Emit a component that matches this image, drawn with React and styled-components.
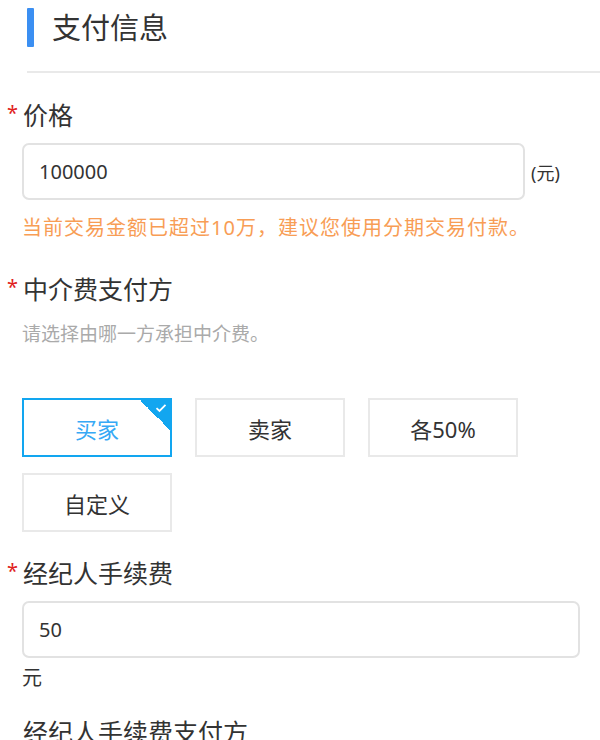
import React, { useState } from "react";
import styled, { createGlobalStyle } from "styled-components";

const GlobalStyle = createGlobalStyle`
  body {
    margin: 0;
    background: #fff;
    font-family: "Noto Sans", "Noto Sans CJK SC", sans-serif;
    color: #333;
  }
`;

const options = ["买家", "卖家", "各50%", "自定义"];

const App = () => {
  const [payer, setPayer] = useState("买家");

  return (
    <Page>
      <GlobalStyle />
      <Header>
        <Bar />
        <Title>支付信息</Title>
      </Header>
      <Form>
        <Field>
          <Label required>价格</Label>
          <InputRow>
            <Input defaultValue="100000" width="503px" />
            <Unit>(元)</Unit>
          </InputRow>
          <Hint>当前交易金额已超过10万，建议您使用分期交易付款。</Hint>
        </Field>

        <Field>
          <Label required>中介费支付方</Label>
          <SubText>请选择由哪一方承担中介费。</SubText>
          <Options>
            {options.map((o) => (
              <Option key={o} active={o === payer} onClick={() => setPayer(o)}>
                {o}
                {o === payer && (
                  <Corner>
                    <svg width="12" height="10" viewBox="0 0 12 10">
                      <path
                        d="M1.5 5.2 L4.5 8 L10.5 1.8"
                        fill="none"
                        stroke="#fff"
                        strokeWidth="1.8"
                      />
                    </svg>
                  </Corner>
                )}
              </Option>
            ))}
          </Options>
        </Field>

        <Field>
          <Label required>经纪人手续费</Label>
          <InputRow>
            <Input defaultValue="50" width="558px" />
          </InputRow>
          <After>元</After>
        </Field>

        <Field>
          <Label>经纪人手续费支付方</Label>
        </Field>
      </Form>
    </Page>
  );
};

const Page = styled.div`
  width: 600px;
  height: 740px;
  overflow: hidden;
`;

const Header = styled.div`
  display: flex;
  align-items: center;
  margin-left: 27px;
  padding: 8px 0 24px;
  border-bottom: 2px solid #e9e9e9;
`;

const Bar = styled.div`
  width: 7px;
  height: 39px;
  background: #3b8ff2;
  border-radius: 1px;
`;

const Title = styled.h2`
  margin: 0 0 0 18px;
  font-size: 29px;
  font-weight: 400;
  line-height: 39px;
  color: #333;
`;

const Form = styled.div`
  padding: 24px 0 0 22px;
`;

const Field = styled.div`
  margin-bottom: 13px;
`;

const Label = styled.div`
  display: flex;
  align-items: center;
  font-size: 25px;
  line-height: 36px;
  color: #333;
  &::before {
    content: ${(p) => (p.required ? '"*"' : '""')};
    width: 16px;
    margin-left: -16px;
    color: #e02020;
    font-size: 20px;
    line-height: 1;
    align-self: flex-start;
    padding-top: 6px;
    padding-left: 1px;
  }
`;

const InputRow = styled.div`
  display: flex;
  align-items: center;
  margin-top: 10px;
`;

const Input = styled.input`
  box-sizing: border-box;
  width: ${(p) => p.width};
  height: 57px;
  padding: 0 15px;
  border: 2px solid #e2e2e2;
  border-radius: 7px;
  font-family: inherit;
  font-size: 20px;
  color: #333;
  outline: none;
`;

const Unit = styled.span`
  margin-left: 6px;
  font-size: 18px;
  color: #333;
`;

const Hint = styled.div`
  margin-top: 14px;
  margin-bottom: 29px;
  font-size: 20px;
  line-height: 28px;
  letter-spacing: 1px;
  color: #f89d55;
`;

const SubText = styled.div`
  margin-top: 13px;
  font-size: 19px;
  line-height: 28px;
  color: #aaa;
`;

const Options = styled.div`
  display: flex;
  flex-wrap: wrap;
  gap: 16px 23px;
  width: 520px;
  margin-top: 50px;
  margin-bottom: 23px;
`;

const Option = styled.div`
  position: relative;
  box-sizing: border-box;
  width: 150px;
  height: 59px;
  display: flex;
  align-items: center;
  justify-content: center;
  border: 2px solid ${(p) => (p.active ? "#12a6f0" : "#e9e9e9")};
  color: ${(p) => (p.active ? "#36a9f5" : "#333")};
  font-size: 22px;
  cursor: pointer;
  overflow: hidden;
`;

const Corner = styled.div`
  position: absolute;
  top: 0;
  right: 0;
  width: 30px;
  height: 30px;
  background: linear-gradient(45deg, transparent 50%, #12a6f0 50%);
  svg {
    position: absolute;
    top: 3px;
    right: 3px;
  }
`;

const After = styled.div`
  margin-top: 6px;
  margin-bottom: 22px;
  font-size: 20px;
  line-height: 28px;
  color: #333;
`;

export default App;
